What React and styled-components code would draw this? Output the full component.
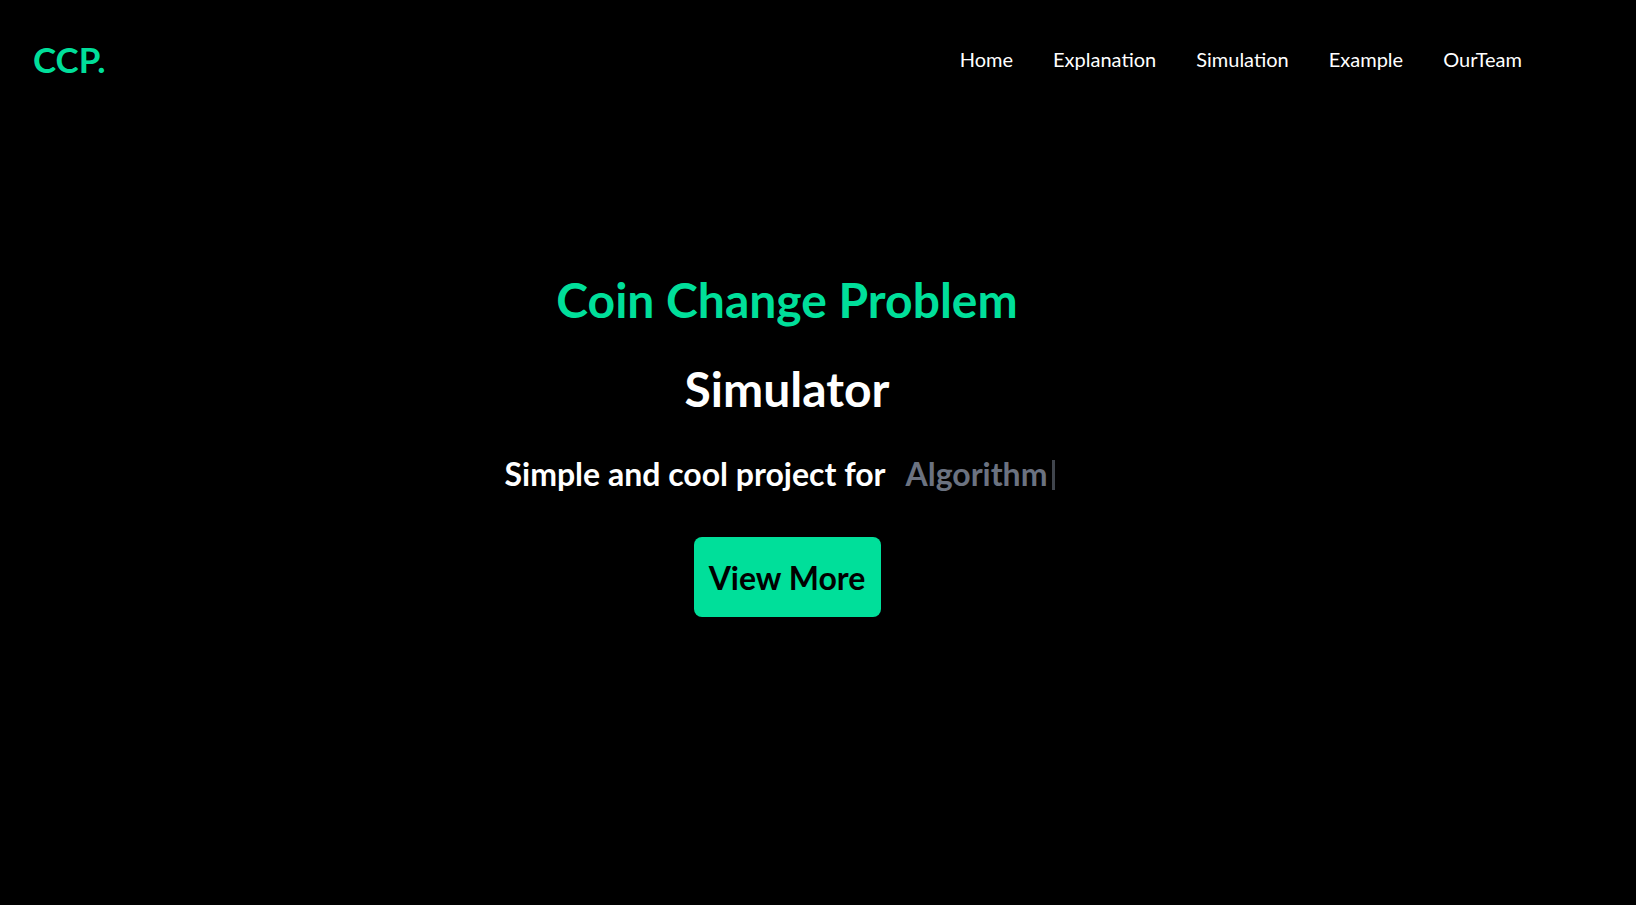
import styled, { createGlobalStyle } from "styled-components";

const GlobalStyle = createGlobalStyle`
    html, body {
        margin: 0;
        padding: 0;
        background: #000;
    }
    body {
        font-family: "Segoe UI", Lato, "Noto Sans", sans-serif;
    }
`;

const links = ["Home", "Explanation", "Simulation", "Example", "OurTeam"];

export default function App() {
    return (
        <>
            <GlobalStyle />
            <Page>
                <Header>
                    <Logo>CCP.</Logo>
                    <NavList>
                        {links.map((link) => (
                            <NavItem key={link}>{link}</NavItem>
                        ))}
                    </NavList>
                </Header>
                <Hero>
                    <Title>Coin Change Problem</Title>
                    <Subtitle>Simulator</Subtitle>
                    <Tagline>
                        Simple and cool project for
                        <Typed>Algorithm</Typed>
                        <Cursor />
                    </Tagline>
                    <ViewButton>View More</ViewButton>
                </Hero>
            </Page>
        </>
    );
}

const Page = styled.div`
    width: 100%;
    min-height: 100vh;
    background: #000;
    color: #fff;
`;

const Header = styled.header`
    height: 118px;
    display: flex;
    justify-content: space-between;
    align-items: center;
    padding: 0 114px 0 33px;
`;

const Logo = styled.h1`
    margin: 0;
    font-size: 35px;
    font-weight: 700;
    color: #00df9a;
`;

const NavList = styled.ul`
    display: flex;
    gap: 40px;
    list-style: none;
    margin: 0;
    padding: 0;
`;

const NavItem = styled.li`
    font-size: 20px;
    color: #fff;
    cursor: pointer;
`;

const Hero = styled.section`
    display: flex;
    flex-direction: column;
    align-items: center;
    text-align: center;
    padding-right: 62px;
    padding-top: 153px;
`;

const Title = styled.h2`
    margin: 0;
    font-size: 48px;
    font-weight: 700;
    color: #00df9a;
`;

const Subtitle = styled.h2`
    margin: 32px 0 0;
    font-size: 48px;
    font-weight: 700;
    color: #fff;
`;

const Tagline = styled.p`
    display: flex;
    align-items: center;
    margin: 37px 14px 0 0;
    font-size: 32px;
    font-weight: 700;
    color: #fff;
`;

const Typed = styled.span`
    padding-left: 20px;
    color: #6b7280;
`;

const Cursor = styled.span`
    display: inline-block;
    width: 3px;
    height: 30px;
    margin: 2px 0 0 5px;
    background: #40454d;
`;

const ViewButton = styled.button`
    margin-top: 44px;
    width: 187px;
    height: 80px;
    border: none;
    border-radius: 8px;
    background: #00df9a;
    color: #000;
    font-family: inherit;
    font-size: 32px;
    font-weight: 700;
    cursor: pointer;
`;
